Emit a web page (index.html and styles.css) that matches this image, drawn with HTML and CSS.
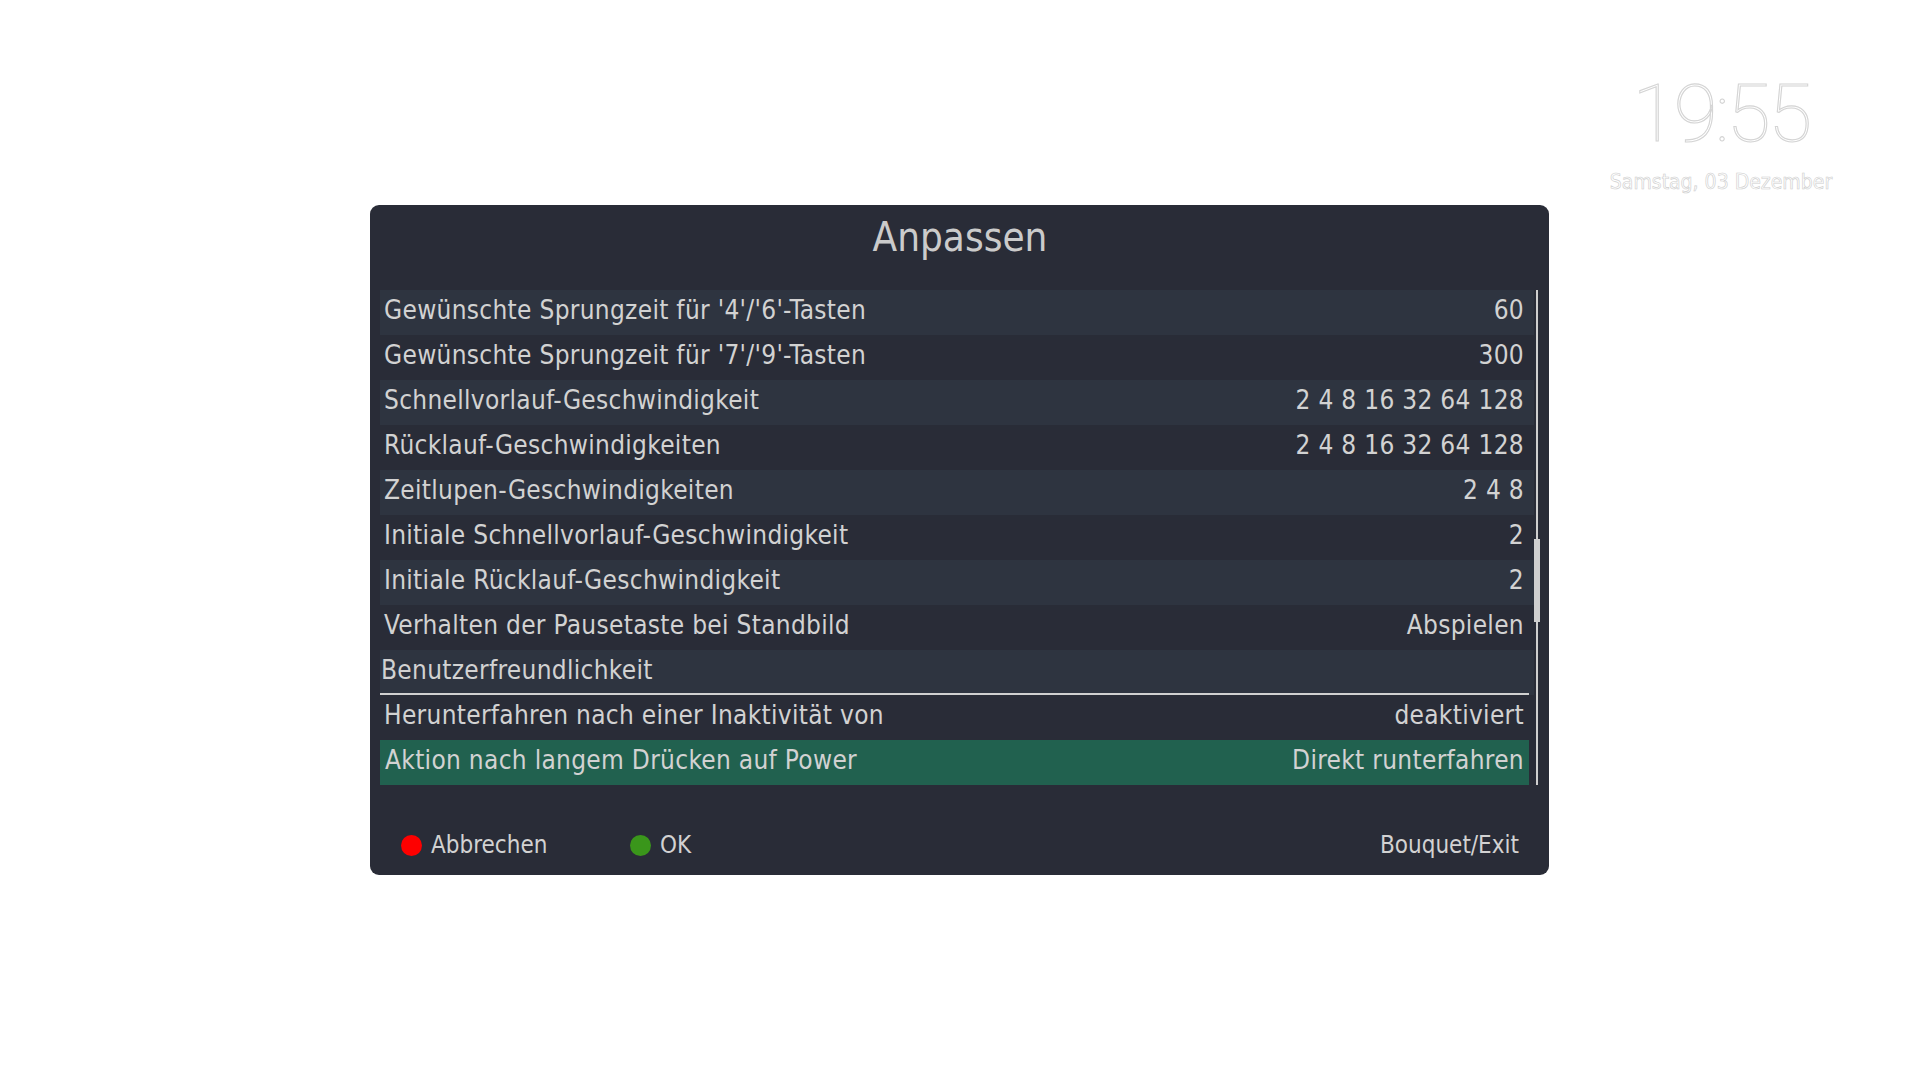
FILE: index.html
```html
<!DOCTYPE html>
<html lang="de">
<head>
<meta charset="utf-8">
<title>Anpassen</title>
<link rel="stylesheet" href="styles.css">
</head>
<body>
<div class="screen">
  <header class="top">
    <div class="clock">
      <div class="time">19:55</div>
      <div class="date">Samstag, 03 Dezember</div>
    </div>
  </header>
  <main class="panel">
    <h1 class="title">Anpassen</h1>
    <div class="listwrap">
      <div class="list">
        <div class="row light"><span class="label">Gewünschte Sprungzeit für '4'/'6'-Tasten</span><span class="value">60</span></div>
        <div class="row"><span class="label">Gewünschte Sprungzeit für '7'/'9'-Tasten</span><span class="value">300</span></div>
        <div class="row light"><span class="label">Schnellvorlauf-Geschwindigkeit</span><span class="value">2 4 8 16 32 64 128</span></div>
        <div class="row"><span class="label">Rücklauf-Geschwindigkeiten</span><span class="value">2 4 8 16 32 64 128</span></div>
        <div class="row light"><span class="label">Zeitlupen-Geschwindigkeiten</span><span class="value">2 4 8</span></div>
        <div class="row"><span class="label">Initiale Schnellvorlauf-Geschwindigkeit</span><span class="value">2</span></div>
        <div class="row light"><span class="label">Initiale Rücklauf-Geschwindigkeit</span><span class="value">2</span></div>
        <div class="row"><span class="label">Verhalten der Pausetaste bei Standbild</span><span class="value">Abspielen</span></div>
        <div class="row section"><span class="label">Benutzerfreundlichkeit</span></div>
        <div class="row"><span class="label">Herunterfahren nach einer Inaktivität von</span><span class="value">deaktiviert</span></div>
        <div class="row selected"><span class="label">Aktion nach langem Drücken auf Power</span><span class="value">Direkt runterfahren</span></div>
      </div>
      <div class="scrollbar"><div class="thumb"></div></div>
    </div>
    <footer class="buttons">
      <div class="btn cancel"><span class="dot red"></span><span>Abbrechen</span></div>
      <div class="btn ok"><span class="dot green"></span><span>OK</span></div>
      <div class="spacer"></div>
      <div class="btn exit"><span>Bouquet/Exit</span></div>
    </footer>
  </main>
</div>
</body>
</html>
```
FILE: styles.css
```css
* { box-sizing: border-box; }
html, body { margin: 0; padding: 0; background: #ffffff; }
body {
  width: 1920px;
  height: 1080px;
  overflow: hidden;
  font-family: "DejaVu Sans Condensed", "Liberation Sans Narrow", "Roboto", sans-serif;
}

.screen { display: flex; flex-direction: column; }

.top { height: 205px; padding-left: 1590px; }
.clock { width: 262px; text-align: center; padding-top: 69px; }
.time {
  font-family: "Roboto", sans-serif;
  font-weight: 100;
  font-size: 80px;
  line-height: 90px;
  letter-spacing: -2.5px;
  color: #ffffff;
  -webkit-text-stroke: 1.1px #d4d4d4;
}
.date {
  font-family: "DejaVu Sans Condensed", sans-serif;
  font-weight: 200;
  font-size: 21px;
  line-height: 26px;
  margin-top: 10px;
  color: #ffffff;
  -webkit-text-stroke: 0.6px #cdcdcd;
}

.panel {
  margin-left: 370px;
  width: 1179px;
  height: 670px;
  background: #292c37;
  border-radius: 9px;
  display: flex;
  flex-direction: column;
  padding: 0 9px 0 10px;
}
.title {
  margin: 0;
  height: 85px;
  padding-top: 7px;
  text-align: center;
  font-weight: normal;
  font-size: 40px;
  line-height: 50px;
  color: #cbcbcb;
}
.listwrap { display: flex; height: 495px; }
.list { width: 1154px; display: flex; flex-direction: column; }
.row {
  height: 45px;
  display: flex;
  align-items: center;
  justify-content: space-between;
  padding: 0 10px 6px 4px;
  font-size: 26px;
  letter-spacing: 0.3px;
  color: #d2d2d2;
}
.row.light { background: #2e3440; }
.row.section {
  padding-left: 1px;
  background:
    linear-gradient(#d0d0d0, #d0d0d0) no-repeat left bottom / calc(100% - 5px) 2px,
    #2e3440;
}
.row.selected { background: #21614f; margin-right: 5px; padding-right: 5px; padding-left: 5px; }
.label, .value { white-space: nowrap; }

.scrollbar { width: 6px; display: flex; justify-content: center; position: relative; }
.scrollbar::before { content: ""; width: 2px; height: 100%; background: #cfcfcf; }
.thumb {
  position: absolute;
  left: 0;
  top: 249px;
  width: 6px;
  height: 83px;
  background: #cfcfcf;
}

.buttons {
  flex: 1;
  display: flex;
  align-items: center;
  padding: 30px 21px 0 21px;
  font-size: 24px;
  color: #d2d2d2;
}
.btn { display: flex; align-items: center; gap: 9px; }
.btn.cancel { width: 229px; }
.spacer { flex: 1; }
.dot { width: 21px; height: 21px; border-radius: 50%; display: inline-block; flex: none; }
.dot.red { background: #fe0000; }
.dot.green { background: #3a961b; }
```
